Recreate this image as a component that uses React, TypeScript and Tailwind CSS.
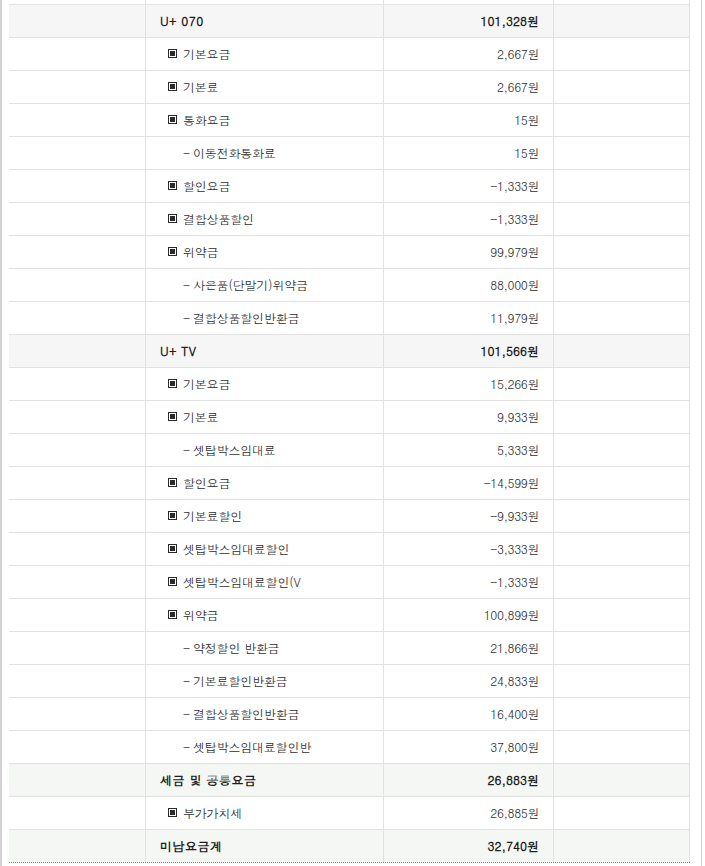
import React from "react"

type Row = {
  kind: "head" | "item" | "sub" | "total"
  label: string
  amount: string
}

const rows: Row[] = [
  { kind: "head", label: "U+ 070", amount: "101,328원" },
  { kind: "item", label: "기본요금", amount: "2,667원" },
  { kind: "item", label: "기본료", amount: "2,667원" },
  { kind: "item", label: "통화요금", amount: "15원" },
  { kind: "sub", label: "이동전화통화료", amount: "15원" },
  { kind: "item", label: "할인요금", amount: "-1,333원" },
  { kind: "item", label: "결합상품할인", amount: "-1,333원" },
  { kind: "item", label: "위약금", amount: "99,979원" },
  { kind: "sub", label: "사은품(단말기)위약금", amount: "88,000원" },
  { kind: "sub", label: "결합상품할인반환금", amount: "11,979원" },
  { kind: "head", label: "U+ TV", amount: "101,566원" },
  { kind: "item", label: "기본요금", amount: "15,266원" },
  { kind: "item", label: "기본료", amount: "9,933원" },
  { kind: "sub", label: "셋탑박스임대료", amount: "5,333원" },
  { kind: "item", label: "할인요금", amount: "-14,599원" },
  { kind: "item", label: "기본료할인", amount: "-9,933원" },
  { kind: "item", label: "셋탑박스임대료할인", amount: "-3,333원" },
  { kind: "item", label: "셋탑박스임대료할인(V", amount: "-1,333원" },
  { kind: "item", label: "위약금", amount: "100,899원" },
  { kind: "sub", label: "약정할인 반환금", amount: "21,866원" },
  { kind: "sub", label: "기본료할인반환금", amount: "24,833원" },
  { kind: "sub", label: "결합상품할인반환금", amount: "16,400원" },
  { kind: "sub", label: "셋탑박스임대료할인반", amount: "37,800원" },
  { kind: "total", label: "세금 및 공통요금", amount: "26,883원" },
  { kind: "item", label: "부가가치세", amount: "26,885원" },
  { kind: "total", label: "미납요금계", amount: "32,740원" },
]

// small boxed bullet used before line items
const BoxIcon = () => (
  <span className="inline-flex w-[9px] h-[9px] border border-[#2a2a2a] items-center justify-center mr-[6px] shrink-0">
    <span className="block w-[5px] h-[5px] bg-[#2a2a2a]" />
  </span>
)

function BillRow({ row, last }: { row: Row; last: boolean }) {
  const bold = row.kind === "head" || row.kind === "total"
  const bg =
    row.kind === "head" ? "bg-[#f6f6f6]" : row.kind === "total" ? "bg-[#f5f7f4]" : "bg-white"
  const border = last ? "border-b border-dotted border-[#8a8a8a]" : "border-b border-[#e2e2e2]"

  return (
    <div className={`grid grid-cols-[137px_238px_170px_136px] h-[33px] ${bg} ${border}`}>
      <div className="border-r border-[#e2e2e2]" />
      <div className="border-r border-[#e2e2e2] flex items-center pb-[1px]">
        {bold ? (
          <span className="pl-[14px] font-bold text-[#1e1e1e] tracking-[0.5px]">{row.label}</span>
        ) : row.kind === "item" ? (
          <span className="pl-[22px] flex items-center text-[#2e2e2e] tracking-[-0.2px]">
            <BoxIcon />
            {row.label}
          </span>
        ) : (
          <span className="pl-[37px] flex items-center text-[#2e2e2e] tracking-[-0.2px]">
            <span className="inline-block w-[10px]">-</span>
            {row.label}
          </span>
        )}
      </div>
      <div
        className={`border-r border-[#e2e2e2] flex items-center justify-end pr-[14px] pb-[1px] ${
          bold ? "font-bold text-[#1e1e1e]" : "text-[#2e2e2e] tracking-[-0.4px]"
        }`}
      >
        {row.amount}
      </div>
      <div className="border-r border-[#e2e2e2]" />
    </div>
  )
}

export default function App() {
  return (
    <div
      className="w-[705px] h-[866px] bg-white overflow-hidden text-[12px] leading-none"
      style={{ fontFamily: "Dotum, 'Noto Sans CJK KR', sans-serif" }}
    >
      <div className="w-[702px] h-full border-l-2 border-r border-[#d2d2d2] pl-[7px]">
        <div className="w-[681px]">
          {/* tail of the row above, cut off by the viewport */}
          <div className="grid grid-cols-[137px_238px_170px_136px] h-[5px] border-b border-[#e2e2e2]">
            <div className="border-r border-[#e2e2e2]" />
            <div className="border-r border-[#e2e2e2]" />
            <div className="border-r border-[#e2e2e2]" />
            <div className="border-r border-[#e2e2e2]" />
          </div>
          {rows.map((r, i) => (
            <BillRow key={i} row={r} last={i === rows.length - 1} />
          ))}
        </div>
      </div>
    </div>
  )
}
